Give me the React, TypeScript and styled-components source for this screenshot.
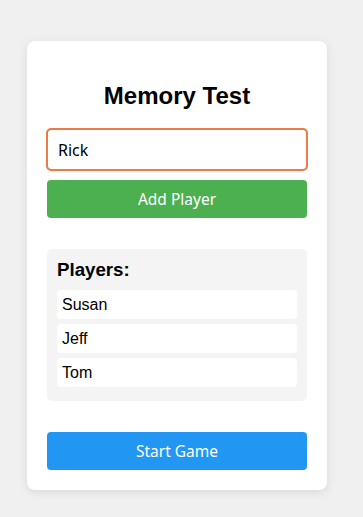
import * as React from 'react';
import styled, { createGlobalStyle } from 'styled-components';

const GlobalStyle = createGlobalStyle`
    html, body {
        margin: 0;
        padding: 0;
        background: #f0f0f0;
    }
    body {
        font-family: "Liberation Sans", Arial, sans-serif;
    }
`;

const Page = styled.div`
    padding: 41px 0 20px 27px;
`;

const Card = styled.div`
    width: 300px;
    box-sizing: border-box;
    padding: 20px;
    background: #ffffff;
    border-radius: 8px;
    box-shadow: 0 2px 10px rgba(0, 0, 0, 0.1);
`;

const Title = styled.h2`
    margin: 21px 0 20px;
    font-size: 24px;
    line-height: 27px;
    font-weight: bold;
    text-align: center;
    color: #000;
`;

const NameInput = styled.input`
    display: block;
    width: 100%;
    box-sizing: border-box;
    height: 41px;
    padding: 0 10px;
    border: 1px solid #ccc;
    border-radius: 4px;
    outline: 2px solid #ef7a46;
    outline-offset: -1px;
    font-family: "Noto Sans", "Open Sans", sans-serif;
    font-size: 16px;
    color: #000;
`;

const ActionButton = styled.button<{ $color: string }>`
    display: block;
    width: 100%;
    height: 38px;
    padding: 0;
    border: none;
    border-radius: 4px;
    background: ${(p) => p.$color};
    color: #fff;
    font-family: "Noto Sans", "Open Sans", sans-serif;
    font-size: 15.5px;
    cursor: pointer;
`;

const AddButton = styled(ActionButton)`
    margin-top: 10px;
`;

const StartButton = styled(ActionButton)`
    margin-top: 31px;
`;

const PlayersBox = styled.div`
    margin-top: 31px;
    padding: 10px 10px 14px;
    background: #f4f4f4;
    border-radius: 5px;
`;

const PlayersTitle = styled.h3`
    margin: 0 0 10px;
    font-size: 18.7px;
    line-height: 21px;
    font-weight: bold;
    color: #000;
`;

const PlayerList = styled.ul`
    list-style: none;
    margin: 0;
    padding: 0;
    display: flex;
    flex-direction: column;
    gap: 5px;
`;

const PlayerItem = styled.li`
    padding: 5px;
    height: 19px;
    line-height: 19px;
    background: #fff;
    border-radius: 4px;
    font-size: 16px;
    color: #000;
`;

const players = ['Susan', 'Jeff', 'Tom'];

const App = () => (
    <Page>
        <GlobalStyle />
        <Card>
            <Title>Memory Test</Title>
            <NameInput defaultValue="Rick" />
            <AddButton $color="#4caf50">Add Player</AddButton>
            <PlayersBox>
                <PlayersTitle>Players:</PlayersTitle>
                <PlayerList>
                    {players.map((name) => (
                        <PlayerItem key={name}>{name}</PlayerItem>
                    ))}
                </PlayerList>
            </PlayersBox>
            <StartButton $color="#2196f3">Start Game</StartButton>
        </Card>
    </Page>
);

export default App;
